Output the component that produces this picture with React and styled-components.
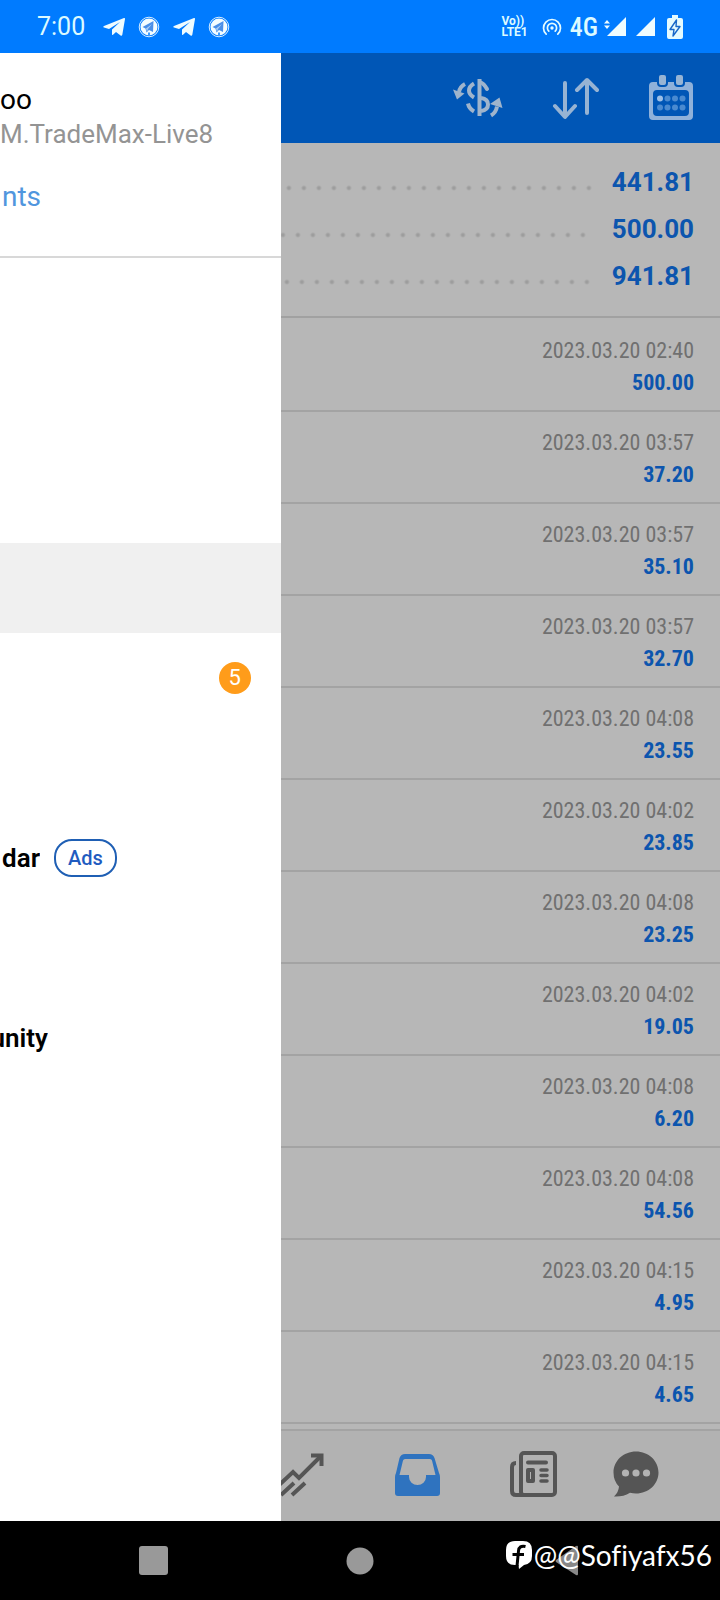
import React from 'react';
import styled, { createGlobalStyle } from 'styled-components';

const totals = [
  { value: '441.81', gap: 20 },
  { value: '500.00', gap: 26 },
  { value: '941.81', gap: 22 },
];

const deals = [
  { time: '2023.03.20 02:40', profit: '500.00' },
  { time: '2023.03.20 03:57', profit: '37.20' },
  { time: '2023.03.20 03:57', profit: '35.10' },
  { time: '2023.03.20 03:57', profit: '32.70' },
  { time: '2023.03.20 04:08', profit: '23.55' },
  { time: '2023.03.20 04:02', profit: '23.85' },
  { time: '2023.03.20 04:08', profit: '23.25' },
  { time: '2023.03.20 04:02', profit: '19.05' },
  { time: '2023.03.20 04:08', profit: '6.20' },
  { time: '2023.03.20 04:08', profit: '54.56' },
  { time: '2023.03.20 04:15', profit: '4.95' },
  { time: '2023.03.20 04:15', profit: '4.65' },
];

const Plane = () => (
  <svg width="22" height="20" viewBox="0 0 22 20">
    <path d="M21 1 1 9c-1 .5-1 1.200 0 1.500l5 1.600L17 5 9 12.500 9 18c.8 0 1.200-.4 1.600-.8l2.400-2.300 4.600 3.600c.8.500 1.500.2 1.700-.8L22 2c.1-.9-.3-1.300-1-1z" fill="#effcff" />
  </svg>
);

const PlaneDisc = () => (
  <svg width="22" height="22" viewBox="0 0 22 22">
    <circle cx="11" cy="11" r="9.800" fill="none" stroke="#d6ecff" strokeWidth="1" />
    <circle cx="11" cy="11" r="8.500" fill="#f4fcff" />
    <path d="M15.500 5 4.500 11l3 1.500 1 4 2.500-2.500 4 2z" fill="#4b8fe8" />
    <path d="m8 12.500 6-4.500-4 5-1 3z" fill="#a9cdf6" />
    <path d="M11 16.500v3" stroke="#007bff" strokeWidth="1.500" />
  </svg>
);

const Hotspot = () => (
  <svg width="20" height="18" viewBox="0 0 20 18" fill="none" stroke="#e4fbff" strokeWidth="1.700" strokeLinecap="round">
    <circle cx="10" cy="10" r="1.700" fill="#e4fbff" stroke="none" />
    <path d="M6.800 13.200a4.600 4.600 0 1 1 6.400 0" />
    <path d="M4.200 16.200a8.500 8.500 0 1 1 11.600 0" />
  </svg>
);

const Signal = ({ data }) => (
  <svg width={data ? 22 : 19} height="19" viewBox={data ? '-3 0 22 19' : '0 0 19 19'} fill="#effcff" overflow="visible">
    <path d="M19 0v19H0z" />
    {data && <path d="m0 3-3 3.600h6zM0 12-3 8.400h6z" />}
  </svg>
);

const Battery = () => (
  <svg width="16" height="24" viewBox="0 0 16 24">
    <path d="M5 0h6v3h3q2 0 2 2v17q0 2-2 2H2q-2 0-2-2V5q0-2 2-2h3z" fill="#e4fbff" />
    <path d="M9.500 5 3 14.500h4L6 21l7-9.500H9z" fill="#e4fbff" stroke="#1768c8" strokeWidth="1.400" strokeLinejoin="round" />
  </svg>
);

const ExchangeIcon = () => (
  <svg width="50" height="48" viewBox="0 0 50 48" fill="none" stroke="#9fb4cc" strokeWidth="4">
    <path d="M26.500 5v37" />
    <path d="M27 8q4 1.500 7 7" strokeLinecap="round" />
    <path d="M21 9.500q-5 3-5 7t5 7" />
    <path d="M28 24q7 1 7 6.500T28 37" />
    <path d="M15 29.500q1 5 6 8" />
    <path d="M12 10q-5 2.500-6 8" />
    <path d="m0 15.500 11.500 4-7.500 6z" fill="#9fb4cc" stroke="none" />
    <path d="M38 41.500q5-3 6-9" />
    <path d="m37 30 9.500-6.500 3 10.500z" fill="#9fb4cc" stroke="none" />
  </svg>
);

const SortIcon = () => (
  <svg width="48" height="48" viewBox="0 0 48 48" fill="none" stroke="#97b3d3" strokeWidth="4" strokeLinecap="round" strokeLinejoin="round">
    <path d="M14 9v33M4 32l10 11 10-11M36 39V7M26 16 36 6l10 10" />
  </svg>
);

const CalendarIcon = () => (
  <svg width="48" height="48" viewBox="0 0 48 48">
    <path d="M6 8h36q4 0 4 4v30q0 4-4 4H6q-4 0-4-4V12q0-4 4-4zm4 8q-4 0-4 4v18q0 4 4 4h28q4 0 4-4V20q0-4-4-4z" fill="#8fb1da" fillRule="evenodd" />
    <g fill="#97b4d4" stroke="#0056b6" strokeWidth="2">
      <rect x="11" y="0" width="9" height="12" rx="3" />
      <rect x="28" y="0" width="9" height="12" rx="3" />
    </g>
    <circle cx="13" cy="24.500" r="3" fill="#9dbfe6" />
    <g fill="#4a8ad0">
      {[20.5, 28, 35.5].map((x) => <circle key={x} cx={x} cy="24.500" r="3" />)}
      {[13, 20.5, 28, 35.5].map((x) => <circle key={x} cx={x} cy="33.500" r="3" />)}
    </g>
  </svg>
);

const TrendIcon = () => (
  <svg width="48" height="48" viewBox="0 0 48 48" fill="none" stroke="#555" strokeWidth="4">
    <path d="m1 36 15-14 6 6L44 6" />
    <path d="M34 5.500h10.500V16" />
    <path d="m4 45 13-12M15 45l13-12" />
  </svg>
);

const InboxIcon = () => (
  <svg width="48" height="48" viewBox="0 0 48 48">
    <path d="M12 4h24q4 0 5.500 4L46 23q1 2 1 4v16q0 3-3 3H5q-3 0-3-3V27q0-2 1-4L6.500 8Q8 4 12 4zm0 5q-1.500 0-2 1.500L6.500 25H16v2a8.500 8 0 0 0 17 0v-2h9.500L39 10.500Q38.500 9 37 9z" fill="#2f73bf" fillRule="evenodd" />
  </svg>
);

const NewsIcon = () => (
  <svg width="48" height="48" viewBox="0 0 48 48" fill="none" stroke="#555" strokeWidth="4">
    <rect x="12" y="3" width="34" height="42" rx="3" />
    <path d="M7 13q-4 0-4 4v24q0 4 4 4h8" />
    <path d="M19 12.500h18" strokeLinecap="round" />
    <rect x="19" y="20" width="5" height="11" strokeLinejoin="round" />
    <path d="M32 20h6M32 25.500h6M32 31h6" strokeWidth="3.500" strokeLinecap="round" />
  </svg>
);

const ChatIcon = () => (
  <svg width="48" height="48" viewBox="0 0 48 48">
    <path d="M24 1.500c12.500 0 22.500 9.300 22.500 21S36.500 43.500 24 43.500q-3 0-6-.8Q11 47 2 46.500q4.500-4 5-10Q1.500 31 1.500 22.500c0-11.700 10-21 22.500-21z" fill="#555" />
    <g fill="#b3b3b3">
      <circle cx="13.500" cy="23" r="3.600" />
      <circle cx="24" cy="23" r="3.600" />
      <circle cx="34.500" cy="23" r="3.600" />
    </g>
  </svg>
);

const BrandMark = () => (
  <svg width="26" height="28" viewBox="0 0 26 28">
    <path d="M9 0h8q9 0 9 9v6q0 8-8 9l-5 4-.5-4H9Q0 24 0 15V9q0-9 9-9z" fill="#fff" />
    <path d="M19.500 5.500Q13 4 12.500 10L11 25M6.500 13.500H18" fill="none" stroke="#000" strokeWidth="3" />
  </svg>
);

const App = () => {
  return (
    <Screen>
      <GlobalStyle />
      <StatusBar>
        <Clock>7:00</Clock>
        <Notices>
          <Plane />
          <PlaneDisc />
          <Plane />
          <PlaneDisc />
        </Notices>
        <Volte>
          <span>Vo))</span>
          <span>LTE1</span>
        </Volte>
        <Hotspot />
        <Network>4G</Network>
        <Signals>
          <Signal data />
          <Signal />
        </Signals>
        <Battery />
      </StatusBar>

      <Body>
        <Toolbar>
          <IconButton aria-label="Symbol"><ExchangeIcon /></IconButton>
          <IconButton aria-label="Sort"><SortIcon /></IconButton>
          <IconButton aria-label="Period"><CalendarIcon /></IconButton>
        </Toolbar>
        <Summary>
          {totals.map((t) => (
            <Total key={t.value}>
              <Dots $gap={t.gap} />
              <TotalValue>{t.value}</TotalValue>
            </Total>
          ))}
        </Summary>
        <DealList>
          {deals.map((deal, i) => (
            <Deal key={i}>
              <Time>{deal.time}</Time>
              <Profit>{deal.profit}</Profit>
            </Deal>
          ))}
        </DealList>
        <Tabs>
          <IconButton aria-label="Trade"><TrendIcon /></IconButton>
          <IconButton aria-label="History"><InboxIcon /></IconButton>
          <IconButton aria-label="News"><NewsIcon /></IconButton>
          <IconButton aria-label="Messages"><ChatIcon /></IconButton>
        </Tabs>

        <Drawer>
          <Account>
            <Name>oo</Name>
            <Server>M.TradeMax-Live8</Server>
            <Manage href="#accounts">nts</Manage>
          </Account>
          <Menu>
            <MenuRow />
            <MenuRow />
            <MenuRow />
            <MenuRow $active />
            <MenuRow>
              <Badge>5</Badge>
            </MenuRow>
            <MenuRow />
            <MenuRow>
              <MenuLabel $width="40px">dar</MenuLabel>
              <Ads>Ads</Ads>
            </MenuRow>
            <MenuRow />
            <MenuRow>
              <MenuLabel $width="48px">unity</MenuLabel>
            </MenuRow>
          </Menu>
        </Drawer>
      </Body>

      <NavBar>
        <IconButton aria-label="Recent apps">
          <svg width="30" height="30"><rect width="29" height="29" x="1" rx="3" fill="#999" /></svg>
        </IconButton>
        <IconButton aria-label="Home">
          <svg width="28" height="28"><circle cx="14" cy="14" r="13.500" fill="#999" /></svg>
        </IconButton>
        <IconButton aria-label="Back">
          <svg width="26" height="32"><path d="M24 2v27q0 2-2 1L2 17q-1-1 0-2L22 1q2-1 2 1z" fill="#888" /></svg>
        </IconButton>
        <Credit>
          <BrandMark />
          <span>@@Sofiyafx56</span>
        </Credit>
      </NavBar>
    </Screen>
  );
};

export default App;

const GlobalStyle = createGlobalStyle`
  * {
    box-sizing: border-box;
  }
  body {
    margin: 0;
    font-family: Roboto, sans-serif;
  }
  svg {
    display: block;
    flex: none;
  }
`;

const Screen = styled.div`
  display: flex;
  flex-direction: column;
  min-height: 100vh;
  background: #b7b7b7;
`;

const StatusBar = styled.header`
  display: flex;
  align-items: center;
  height: 53px;
  padding: 0 37px;
  background: #007bff;
  color: #dcfaff;
`;

const Clock = styled.time`
  font-size: 25px;
  line-height: 28px;
`;

const Notices = styled.div`
  display: flex;
  align-items: center;
  gap: 13px;
  margin: 0 auto 0 18px;
`;

const Volte = styled.div`
  display: flex;
  flex-direction: column;
  margin-right: 14px;
  font-size: 12px;
  line-height: 11px;
  font-weight: 700;
`;

const Network = styled.span`
  margin: 0 6px 0 8px;
  font-family: 'Roboto Condensed', Roboto, sans-serif;
  font-size: 26px;
  line-height: 28px;
  font-weight: 500;
`;

const Signals = styled.div`
  display: flex;
  gap: 10px;
  margin-right: 12px;
`;

const Body = styled.main`
  position: relative;
  flex: 1;
  display: flex;
  flex-direction: column;
`;

const IconButton = styled.button`
  display: flex;
  align-items: center;
  justify-content: center;
  padding: 0;
  border: none;
  background: none;
`;

const Toolbar = styled.div`
  display: flex;
  align-items: center;
  justify-content: flex-end;
  gap: 48px;
  height: 90px;
  padding: 0 25px;
  background: #0056b6;
`;

const Summary = styled.section`
  padding: 16px 26px 16px 200px;
  border-bottom: 2px solid #a1a1a1;
`;

const Total = styled.div`
  display: flex;
  align-items: center;
`;

const Dots = styled.div`
  flex: 1;
  height: 15px;
  margin: 10px ${(props) => props.$gap}px 0 0;
  background: radial-gradient(circle at 12px 8px, #9d9d9d 1px, transparent 3px) right top / 15px 15px repeat-x;
`;

const TotalValue = styled.span`
  color: #0c55ae;
  font-size: 26px;
  line-height: 47px;
  font-weight: 700;
`;

const DealList = styled.ul`
  flex: 1;
  margin: 0;
  padding: 2px 0 5px;
  list-style: none;
`;

const Deal = styled.li`
  display: flex;
  flex-direction: column;
  align-items: flex-end;
  padding: 15px 26px 11px;
  border-bottom: 2px solid #a3a3a3;
  font-family: 'Roboto Condensed', Roboto, sans-serif;
  font-size: 22px;
  line-height: 32px;
`;

const Time = styled.time`
  color: #707070;
`;

const Profit = styled.span`
  color: #0c55ae;
  font-weight: 700;
`;

const Tabs = styled.nav`
  display: grid;
  grid-template-columns: repeat(3, 116px) 90px;
  justify-content: end;
  height: 92px;
  padding: 0 39px 4px 0;
  border-top: 2px solid #a3a3a3;
  background: #b2b2b2;
`;

const Drawer = styled.aside`
  position: absolute;
  top: 0;
  bottom: 0;
  left: 0;
  width: 39%;
  background: #fff;
`;

const Account = styled.div`
  display: flex;
  flex-direction: column;
  padding: 29px 0 42px;
  border-bottom: 2px solid #d8d8d8;
  font-size: 28px;
  line-height: 35px;
`;

const Name = styled.span`
  color: #000;
`;

const Server = styled.span`
  color: #949494;
  font-size: 26px;
`;

const Manage = styled.a`
  margin-top: 27px;
  padding-left: 2px;
  color: #5096de;
  text-decoration: none;
`;

const Menu = styled.ul`
  margin: 0;
  padding: 15px 0;
  list-style: none;
`;

const MenuRow = styled.li`
  display: flex;
  align-items: center;
  height: 90px;
  background: ${(props) => (props.$active ? '#f0f0f0' : 'transparent')};
`;

// labels run off the left edge while the drawer slides
const MenuLabel = styled.span`
  display: flex;
  justify-content: flex-end;
  width: ${(props) => props.$width};
  overflow: hidden;
  color: #000;
  font-size: 26px;
  line-height: 36px;
  font-weight: 600;
`;

const Badge = styled.span`
  width: 32px;
  margin: 0 30px 0 auto;
  border-radius: 50%;
  background: #ff9c1a;
  color: #fff;
  font-size: 22px;
  line-height: 32px;
  text-align: center;
`;

const Ads = styled.span`
  margin-left: 14px;
  padding: 0 12px;
  border: 2px solid #1f5fb4;
  border-radius: 18px;
  color: #1f5bc0;
  font-size: 20px;
  line-height: 34px;
  font-weight: 500;
`;

const NavBar = styled.footer`
  position: relative;
  display: grid;
  grid-template-columns: repeat(3, 207px);
  justify-content: center;
  height: 79px;
  background: #000;
`;

const Credit = styled.div`
  position: absolute;
  top: 16px;
  right: 8px;
  display: flex;
  align-items: center;
  gap: 2px;
  color: #fff;
  font-family: Lato, sans-serif;
  font-size: 28px;
  font-variant-ligatures: none;
  line-height: 36px;
`;
